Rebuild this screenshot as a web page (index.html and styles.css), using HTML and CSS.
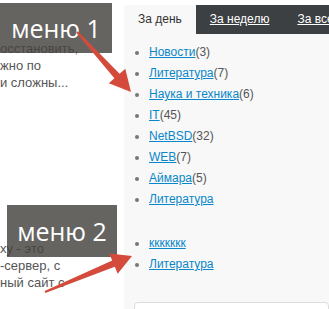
FILE: index.html
```html
<!DOCTYPE html>
<html lang="ru">
<head>
<meta charset="UTF-8">
<meta name="viewport" content="width=device-width, initial-scale=1.0">
<title>Теги</title>
<link rel="stylesheet" href="styles.css">
</head>
<body>
<div class="page">
    <div class="news-col">
        <p class="snippet">осстановить,<br>жно по<br>и сложны...</p>
        <p class="snippet snippet-low">ху - это<br>-сервер, с<br>ный сайт с</p>
    </div>
    <div class="tags-panel">
        <div class="tabs">
            <span class="tab active">За день</span>
            <a class="tab" href="#">За неделю</a>
            <a class="tab" href="#">За все время</a>
        </div>
        <ul class="tag-list">
            <li><span><a href="#">Новости</a><span class="count">(3)</span></span></li>
            <li><span><a href="#">Литература</a><span class="count">(7)</span></span></li>
            <li><span><a href="#">Наука и техника</a><span class="count">(6)</span></span></li>
            <li><span><a href="#">IT</a><span class="count">(45)</span></span></li>
            <li><span><a href="#">NetBSD</a><span class="count">(32)</span></span></li>
            <li><span><a href="#">WEB</a><span class="count">(7)</span></span></li>
            <li><span><a href="#">Аймара</a><span class="count">(5)</span></span></li>
            <li><span><a href="#">Литература</a></span></li>
        </ul>
        <ul class="tag-list second">
            <li><span><a href="#">ккккккк</a></span></li>
            <li><span><a href="#">Литература</a></span></li>
        </ul>
        <div class="comment-box"></div>
    </div>
</div>

<!-- annotations drawn over the screenshot -->
<div class="note note-1">меню 1</div>
<div class="note note-2">меню 2</div>
<svg class="arrows" width="329" height="309" viewBox="0 0 329 309">
    <polygon points="77.75,31.3 119.6,73.7 125.3,68.7 131,92 108.8,83.3 114.4,78.3 76.25,32.7"/>
    <polygon points="44.6,291.1 112.2,260.4 109.3,253.4 132,256 117.7,273.8 114.8,266.8 45.4,292.9"/>
</svg>
</body>
</html>
```

FILE: styles.css
```css
body {
    margin: 0;
    position: relative;
    font-family: "Liberation Sans", Arial, sans-serif;
    background: #fff;
}

.page {
    display: flex;
    height: 309px;
    overflow: hidden;
}

.news-col {
    flex: none;
    width: 124px;
    padding-top: 40px;
    font-size: 13px;
    line-height: 17px;
    color: #555;
    white-space: nowrap;
    overflow: hidden;
}

.snippet {
    margin: 0;
}

.snippet-low {
    margin-top: 149px;
}

.tags-panel {
    flex: 1;
    min-width: 0;
    margin-top: 5px;
    background: #f8f8f8;
    overflow: hidden;
}

.tabs {
    display: flex;
    height: 29px;
    background: #3d4043;
    white-space: nowrap;
}

.tab {
    padding: 0 14px;
    line-height: 29px;
    font-size: 12px;
    color: #fff;
    text-decoration: underline;
}

.tab.active {
    background: #f8f8f8;
    color: #333;
    text-decoration: none;
}

.tag-list {
    margin: 0;
    padding: 8px 0 0 11px;
    list-style: none;
    font-size: 12px;
    line-height: 21px;
}

.tag-list li {
    display: flex;
    align-items: center;
    gap: 10px;
}

.tag-list li::before {
    content: "";
    flex: none;
    width: 4px;
    height: 4px;
    border-radius: 50%;
    background: #777;
}

.tag-list a {
    color: #0a87c9;
    text-decoration: underline;
}

.count {
    color: #555;
}

.second {
    margin-top: 15px;
}

.comment-box {
    margin: 27px 0 0 10px;
    height: 40px;
    background: #fff;
    border: 1px solid #ddd;
    border-radius: 4px;
}

.note {
    position: absolute;
    display: flex;
    align-items: center;
    justify-content: center;
    background: rgba(68, 66, 62, 0.82);
    color: #fff;
    font-family: "Open Sans", sans-serif;
    font-size: 25px;
}

.note-1 {
    left: 0;
    top: 3px;
    width: 112px;
    height: 50px;
}

.note-2 {
    left: 7px;
    top: 205px;
    width: 110px;
    height: 52px;
}

.arrows {
    position: absolute;
    left: 0;
    top: 0;
    fill: #d44b3c;
    pointer-events: none;
}
```
